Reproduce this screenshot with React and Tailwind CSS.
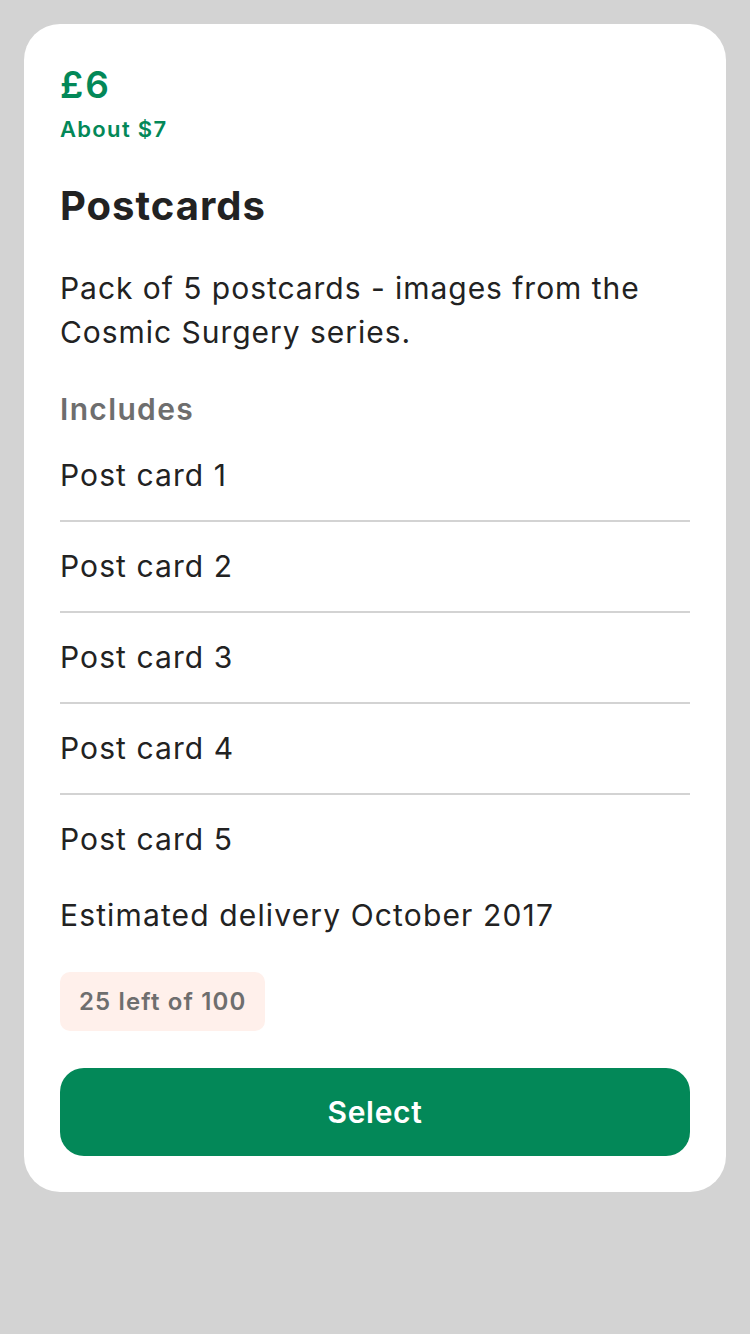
import React from "react";

const items = ["Post card 1", "Post card 2", "Post card 3", "Post card 4", "Post card 5"];

const App = () => {
  return (
    <div
      className="min-h-[1334px] w-full bg-[#d3d3d3] px-6 pt-6"
      style={{ fontFamily: "Inter, 'Noto Sans', sans-serif" }}
    >
      <div className="rounded-[36px] bg-white px-9 pt-[39px] pb-9">
        <div className="text-[37px] font-semibold leading-[44px] tracking-[0.05em] text-[#038858]">£6</div>
        <div className="mt-2 text-[22px] font-semibold leading-[28px] tracking-[0.06em] text-[#038858]">About $7</div>

        <h2 className="mt-[39px] text-[40px] font-bold leading-[48px] tracking-[0.025em] text-[#222]">Postcards</h2>

        <p className="mt-9 text-[30px] leading-[44px] tracking-[0.032em] text-[#222]">
          Pack of 5 postcards - images from the Cosmic Surgery series.
        </p>

        <div className="mt-[35px] text-[30px] font-semibold leading-[40px] tracking-[0.045em] text-[#6e6e6e]">
          Includes
        </div>

        <ul className="mt-[2px]">
          {items.map((item, i) => (
            <li
              key={item}
              className={`flex h-[89px] items-center text-[30px] tracking-[0.036em] text-[#222] ${
                i < items.length - 1 ? "box-content border-b-2 border-[#d3d3d3]" : ""
              }`}
            >
              {item}
            </li>
          ))}
        </ul>

        <div className="mt-[11px] text-[30px] leading-[40px] tracking-[0.038em] text-[#222]">
          Estimated delivery October 2017
        </div>

        <div className="mt-[37px] inline-flex h-[59px] items-center rounded-[10px] bg-[#fff0eb] px-[19px] text-[24px] font-semibold tracking-[0.048em] text-[#6e6e6e]">
          25 left of 100
        </div>

        <button className="mt-[37px] flex h-[88px] w-full items-center justify-center rounded-[24px] bg-[#038858] text-[30px] font-semibold tracking-[0.023em] text-white">
          Select
        </button>
      </div>
    </div>
  );
};

export default App;
